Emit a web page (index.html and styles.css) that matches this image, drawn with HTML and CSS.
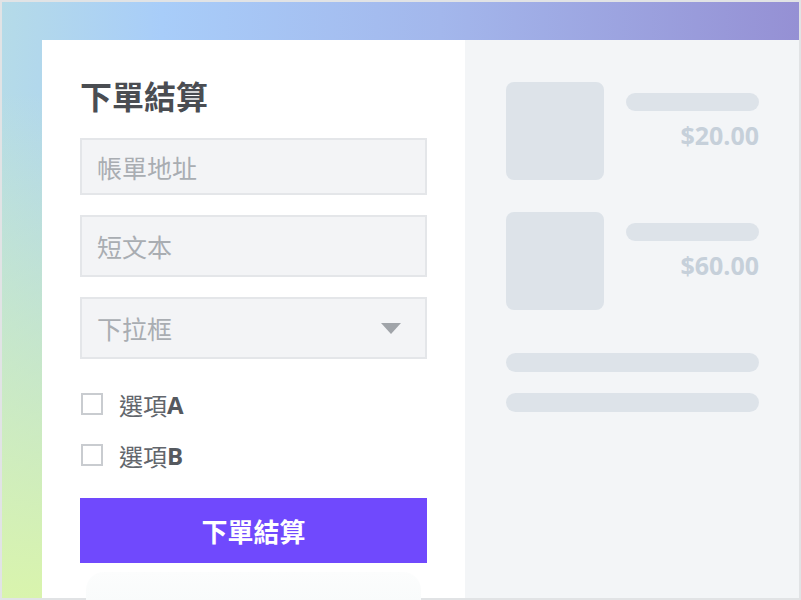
FILE: index.html
```html
<!DOCTYPE html>
<html lang="zh-Hant">
<head>
  <meta charset="UTF-8">
  <meta name="viewport" content="width=device-width, initial-scale=1.0">
  <title>下單結算</title>
  <link rel="stylesheet" href="styles.css">
</head>
<body>
  <div class="frame">
    <div class="card">
      <div class="checkout">
        <h2 class="title">下單結算</h2>
        <div class="field field-first">帳單地址</div>
        <div class="field">短文本</div>
        <div class="field select">
          下拉框
          <span class="arrow"></span>
        </div>
        <label class="check"><span class="box"></span>選項<b>A</b></label>
        <label class="check"><span class="box"></span>選項<b>B</b></label>
        <div class="submit">下單結算</div>
        <div class="ghost"></div>
      </div>
      <div class="summary">
        <div class="item">
          <div class="thumb"></div>
          <div class="info">
            <div class="bar"></div>
            <div class="price">$20.00</div>
          </div>
        </div>
        <div class="item">
          <div class="thumb"></div>
          <div class="info">
            <div class="bar"></div>
            <div class="price">$60.00</div>
          </div>
        </div>
        <div class="line line-first"></div>
        <div class="line"></div>
      </div>
    </div>
  </div>
</body>
</html>
```

FILE: styles.css
```css
/* checkout mock */
body {
  margin: 0;
  padding: 0;
  font-family: "Open Sans", "Noto Sans CJK TC", sans-serif;
}
.frame {
  width: 801px;
  height: 600px;
  box-sizing: border-box;
  border: 2px solid #e1e3e5;
  padding: 38px 0 0 40px;
  background:
    linear-gradient(to bottom, rgba(217, 243, 174, 0) 15%, #d9f4ad 100%),
    linear-gradient(to right, #b5dbe8 0%, #a8cdf9 20%, #a3b7ec 55%, #9590d4 100%);
}
.card {
  display: flex;
  height: 558px;
}
.checkout {
  width: 423px;
  box-sizing: border-box;
  background: #fff;
  padding: 0 38px;
}
.title {
  margin: 0;
  padding-top: 35px;
  font-size: 32px;
  line-height: 44px;
  font-weight: bold;
  color: #4a4d52;
}
.field {
  height: 62px;
  box-sizing: border-box;
  margin-top: 20px;
  border: 2px solid #e4e6e9;
  background: #f3f4f6;
  padding-left: 15px;
  display: flex;
  align-items: center;
  font-size: 25px;
  color: #a9adb2;
}
.field-first {
  height: 57px;
  margin-top: 19px;
}
.select {
  justify-content: space-between;
  padding-right: 24px;
}
.arrow {
  width: 0;
  height: 0;
  border-left: 10px solid transparent;
  border-right: 10px solid transparent;
  border-top: 11px solid #a0a4a9;
}
.check {
  display: flex;
  align-items: center;
  font-size: 24px;
  color: #62666c;
  height: 24px;
  margin-top: 33px;
}
.check + .check {
  margin-top: 27px;
}
.check b {
  font-weight: bold;
  color: #55595f;
}
.box {
  width: 22px;
  height: 22px;
  box-sizing: border-box;
  border: 2px solid #c9ccd0;
  margin: 0 16px 0 1px;
}
.submit {
  margin-top: 31px;
  height: 65px;
  background: #7049fd;
  color: #fff;
  font-size: 26px;
  font-weight: bold;
  display: flex;
  align-items: center;
  justify-content: center;
}
.ghost {
  margin: 9px 6px 0;
  height: 30px;
  border-radius: 18px 18px 0 0;
  background: linear-gradient(to bottom, #fcfdfd, #f9fbfb);
}
.summary {
  flex: 1;
  background: #f3f5f7;
  padding: 42px 40px 0 41px;
}
.item {
  display: flex;
  gap: 22px;
  margin-bottom: 32px;
}
.thumb {
  width: 98px;
  height: 98px;
  border-radius: 8px;
  background: #dde3e9;
}
.info {
  flex: 1;
  padding-top: 11px;
}
.bar {
  height: 18px;
  border-radius: 9px;
  background: #dde3e9;
}
.price {
  margin-top: 7px;
  text-align: right;
  font-size: 25px;
  line-height: 34px;
  font-weight: bold;
  color: #c6d0da;
}
.line {
  height: 19px;
  border-radius: 10px;
  background: #dde3e9;
  margin-top: 21px;
}
.line-first {
  margin-top: 43px;
}
```
